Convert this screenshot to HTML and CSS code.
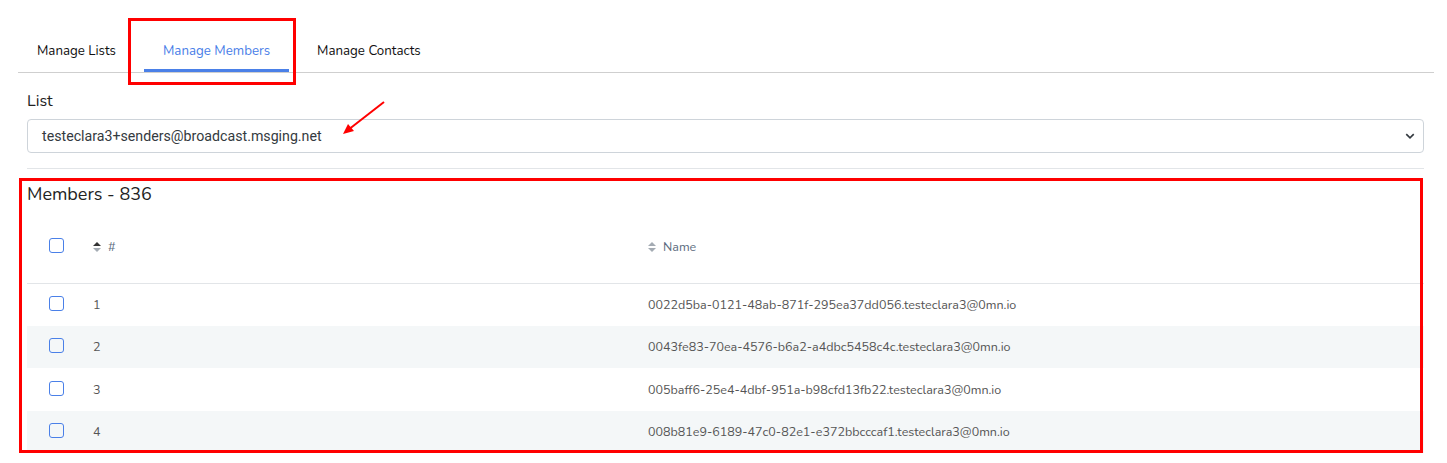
FILE: index.html
```html
<!DOCTYPE html>
<html lang="en">
<head>
    <meta charset="UTF-8">
    <title>Manage Members</title>
    <link rel="stylesheet" href="styles.css">
</head>
<body>
    <div class="page">
        <ul class="tabs">
            <li class="tab">Manage Lists</li>
            <li class="tab active">Manage Members</li>
            <li class="tab">Manage Contacts</li>
        </ul>

        <div class="content">
            <div class="field">
                <label class="field-label">List</label>
                <div class="select">
                    <span>testeclara3+senders@broadcast.msging.net</span>
                    <svg class="chevron" viewBox="0 0 16 16">
                        <path d="M2 5l6 6 6-6" />
                    </svg>
                </div>
            </div>

            <hr class="divider">

            <div class="members">
                <h2 class="members-title">Members - 836</h2>
                <table class="table">
                    <thead>
                        <tr>
                            <th class="col-check"><span class="checkbox"></span></th>
                            <th class="col-num"><span class="sort sort-asc"></span>#</th>
                            <th><span class="sort"></span>Name</th>
                        </tr>
                    </thead>
                    <tbody>
                        <tr>
                            <td class="col-check"><span class="checkbox"></span></td>
                            <td class="col-num">1</td>
                            <td>0022d5ba-0121-48ab-871f-295ea37dd056.testeclara3@0mn.io</td>
                        </tr>
                        <tr>
                            <td class="col-check"><span class="checkbox"></span></td>
                            <td class="col-num">2</td>
                            <td>0043fe83-70ea-4576-b6a2-a4dbc5458c4c.testeclara3@0mn.io</td>
                        </tr>
                        <tr>
                            <td class="col-check"><span class="checkbox"></span></td>
                            <td class="col-num">3</td>
                            <td>005baff6-25e4-4dbf-951a-b98cfd13fb22.testeclara3@0mn.io</td>
                        </tr>
                        <tr>
                            <td class="col-check"><span class="checkbox"></span></td>
                            <td class="col-num">4</td>
                            <td>008b81e9-6189-47c0-82e1-e372bbcccaf1.testeclara3@0mn.io</td>
                        </tr>
                    </tbody>
                </table>
            </div>
        </div>

        <!-- annotations -->
        <div class="mark mark-tab"></div>
        <div class="mark mark-members"></div>
        <svg class="arrow" viewBox="0 0 50 40">
            <line x1="44" y1="2" x2="8" y2="30" />
            <path d="M3 34 L8 24 L14 31 Z" />
        </svg>
    </div>
</body>
</html>
```

FILE: styles.css
```css
* {
    margin: 0;
    padding: 0;
    box-sizing: border-box;
}

body {
    background: #fff;
    font-family: 'Nunito', 'Lato', sans-serif;
    color: #212529;
}

.page {
    position: relative;
    padding: 29px 13px 0 18px;
}

.tabs {
    list-style: none;
    display: flex;
    gap: 9px;
    border-bottom: 1px solid #cfcfcf;
    height: 44px;
}

.tab {
    padding: 13px 19px 0;
    font-size: 13.3px;
    color: #111;
    height: 43px;
}

.tab.active {
    color: #4a80e8;
    border-bottom: 3px solid #4a80e8;
}

.content {
    padding: 0 10px 0 9px;
}

.field {
    padding-top: 19px;
}

.field-label {
    display: block;
    font-size: 16px;
    line-height: 19px;
    color: #222;
    margin-bottom: 8px;
}

.select {
    display: flex;
    align-items: center;
    justify-content: space-between;
    height: 34px;
    padding: 0 8px 0 14px;
    border: 1px solid #ced4da;
    border-radius: 4px;
    font-family: 'Roboto', 'Liberation Sans', sans-serif;
    font-size: 14.2px;
    color: #343a40;
}

.chevron {
    width: 10px;
    height: 10px;
    fill: none;
    stroke: #343a40;
    stroke-width: 2.6;
}

.divider {
    border: 0;
    border-top: 1px solid #e2e5e8;
    margin-top: 15px;
}

.members {
    padding-top: 14px;
}

.members-title {
    font-size: 18px;
    font-weight: 400;
    line-height: 22px;
    color: #222;
}

.table {
    width: 100%;
    border-collapse: collapse;
    margin-top: 11px;
    font-size: 12.5px;
}

.table th {
    text-align: left;
    font-weight: 400;
    color: #5d6c80;
    height: 67px;
    padding: 0 12px 5px;
    border-bottom: 1px solid #e2e5e8;
}

.table td {
    height: 42.5px;
    padding: 0 12px;
    color: #555;
}

.table tbody tr:nth-child(even) {
    background: #f4f7f8;
}

.col-check {
    width: 54px;
    padding-left: 22px !important;
}

.col-num {
    width: 555px;
}

.checkbox {
    display: block;
    width: 15px;
    height: 15px;
    border: 1.5px solid #4a80e8;
    border-radius: 3px;
    margin-top: -2px;
}

.sort {
    display: inline-block;
    position: relative;
    width: 8px;
    height: 10px;
    margin-right: 7px;
    vertical-align: -1px;
}

.sort::before,
.sort::after {
    content: '';
    position: absolute;
    left: 0;
    border-left: 4px solid transparent;
    border-right: 4px solid transparent;
}

.sort::before {
    top: 0;
    border-bottom: 4px solid #a4abb3;
}

.sort::after {
    bottom: 0;
    border-top: 4px solid #a4abb3;
}

.sort-asc::before {
    border-bottom-color: #333;
}

.mark {
    position: absolute;
    border: 3px solid #f00;
}

.mark-tab {
    left: 128px;
    top: 18px;
    width: 168px;
    height: 67px;
}

.mark-members {
    left: 19px;
    top: 178px;
    width: 1404px;
    height: 275px;
}

.arrow {
    position: absolute;
    left: 340px;
    top: 100px;
    width: 50px;
    height: 40px;
}

.arrow line {
    stroke: #f00;
    stroke-width: 2;
}

.arrow path {
    fill: #f00;
}
```
